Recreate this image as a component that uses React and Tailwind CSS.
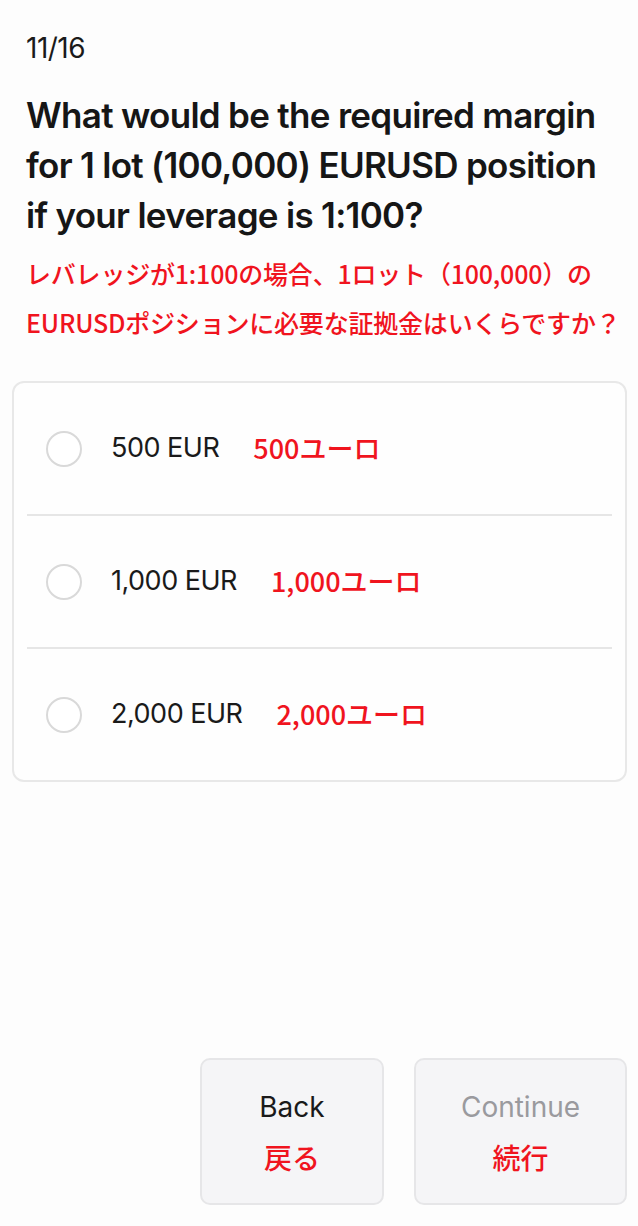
import React from "react";

const options = [
  { en: "500 EUR", ja: "500ユーロ" },
  { en: "1,000 EUR", ja: "1,000ユーロ" },
  { en: "2,000 EUR", ja: "2,000ユーロ" },
];

const sans = "font-['Inter','Noto_Sans_CJK_JP',sans-serif]";
const ja = "font-['Noto_Sans_CJK_JP',sans-serif]";

function Option({ en, ja: jaText, last }) {
  return (
    <div>
      <div className="flex items-center h-[131px] pl-[32px]">
        <span className="w-[36px] h-[36px] rounded-full border-2 border-[#d9d9d9] bg-white shrink-0" />
        <span className={`${sans} ml-[29px] text-[27px] tracking-[-0.5px] text-[#1a1a1a]`}>{en}</span>
        <span className={`${ja} ml-[34px] text-[27px] font-medium text-[#f0141e]`}>{jaText}</span>
      </div>
      {!last && <div className="mx-[13px] h-[2px] bg-[#e6e6e6]" />}
    </div>
  );
}

export default function App() {
  return (
    <div className="h-[1226px] bg-[#fdfdfd] flex flex-col">
      <div className="px-[26px] pt-[34px]">
        <div className={`${sans} text-[28px] leading-none tracking-[-0.5px] text-[#1a1a1a]`}>11/16</div>
        <h1 className={`${sans} mt-[28px] whitespace-nowrap text-[35px] leading-[50px] font-semibold tracking-[-0.7px] text-[#161616]`}>
          What would be the required margin
          <br />
          for 1 lot (100,000) EURUSD position
          <br />
          if your leverage is 1:100?
        </h1>
        <p className={`${ja} mt-[9px] whitespace-nowrap text-[25px] leading-[49px] font-medium tracking-[-0.2px] text-[#f0141e]`}>
          レバレッジが1:100の場合、1ロット（100,000）の
          <br />
          EURUSDポジションに必要な証拠金はいくらですか？
        </p>
      </div>

      <div className="ml-[12px] mt-[34px] mr-[11px] rounded-[12px] border-2 border-[#e8e8e8] bg-[#fefefe]">
        {options.map((o, i) => (
          <Option key={o.en} {...o} last={i === options.length - 1} />
        ))}
      </div>

      <div className="mt-auto flex justify-end gap-[30px] pr-[11px] pb-[21px]">
        <button className="w-[184px] h-[147px] rounded-[10px] border-2 border-[#e6e6e8] bg-[#f5f5f7] flex flex-col items-center justify-center gap-[22px]">
          <span className={`${sans} text-[28px] leading-none text-[#1a1a1a]`}>Back</span>
          <span className={`${ja} text-[28px] leading-none font-medium text-[#f0141e]`}>戻る</span>
        </button>
        <button className="w-[213px] h-[147px] rounded-[10px] border-2 border-[#e6e6e8] bg-[#f5f5f7] flex flex-col items-center justify-center gap-[22px]">
          <span className={`${sans} text-[28px] leading-none text-[#9a9a9e]`}>Continue</span>
          <span className={`${ja} text-[28px] leading-none font-medium text-[#f0141e]`}>続行</span>
        </button>
      </div>
    </div>
  );
}
